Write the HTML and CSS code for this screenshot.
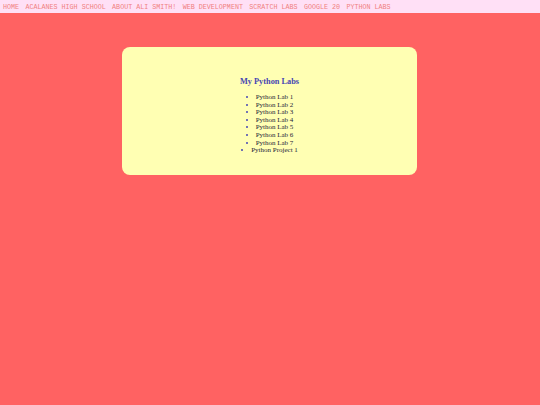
FILE: index.html
```html
<!DOCTYPE html>
<html>
<head>
<meta charset="utf-8">
<link rel="stylesheet" href="styles.css">
</head>
<body>
<nav class="topnav">
  <a href="#">HOME</a>
  <a href="#">ACALANES HIGH SCHOOL</a>
  <a href="#">ABOUT ALI SMITH!</a>
  <a href="#">WEB DEVELOPMENT</a>
  <a href="#">SCRATCH LABS</a>
  <a href="#">GOOGLE 20</a>
  <a href="#">PYTHON LABS</a>
</nav>
<main class="page">
  <section class="card">
    <h1 class="title">My Python Labs</h1>
    <ul class="labs">
      <li>Python Lab 1</li>
      <li>Python Lab 2</li>
      <li>Python Lab 3</li>
      <li>Python Lab 4</li>
      <li>Python Lab 5</li>
      <li>Python Lab 6</li>
      <li>Python Lab 7</li>
      <li>Python Project 1</li>
    </ul>
  </section>
</main>
</body>
</html>
```
FILE: styles.css
```css
html, body {
  margin: 0;
  padding: 0;
}
body {
  background: #ff6262;
  width: 540px;
  height: 405px;
  font-family: "Liberation Serif", serif;
}
.topnav {
  display: flex;
  align-items: center;
  height: 13px;
  background: #ffe0f6;
  padding-left: 3px;
  gap: 6.4px;
}
.topnav a {
  font-family: "Liberation Mono", monospace;
  font-size: 6.7px;
  color: #f08080;
  text-decoration: none;
  white-space: nowrap;
}
.page {
  padding-top: 34px;
  display: flex;
  justify-content: center;
}
.card {
  box-sizing: border-box;
  width: 295px;
  height: 128px;
  margin-left: -1px;
  background: #ffffb3;
  border-radius: 8px;
  padding-top: 29px;
  text-align: center;
}
.title {
  margin: 0 0 7px 0;
  font-size: 8.3px;
  font-weight: bold;
  color: #4646b4;
  line-height: 11px;
}
.labs {
  margin: 0;
  padding: 0;
  list-style-position: inside;
  font-size: 7px;
  line-height: 7.6px;
  color: #1c1c38;
}
.labs li::marker {
  color: #4646b4;
}
```
